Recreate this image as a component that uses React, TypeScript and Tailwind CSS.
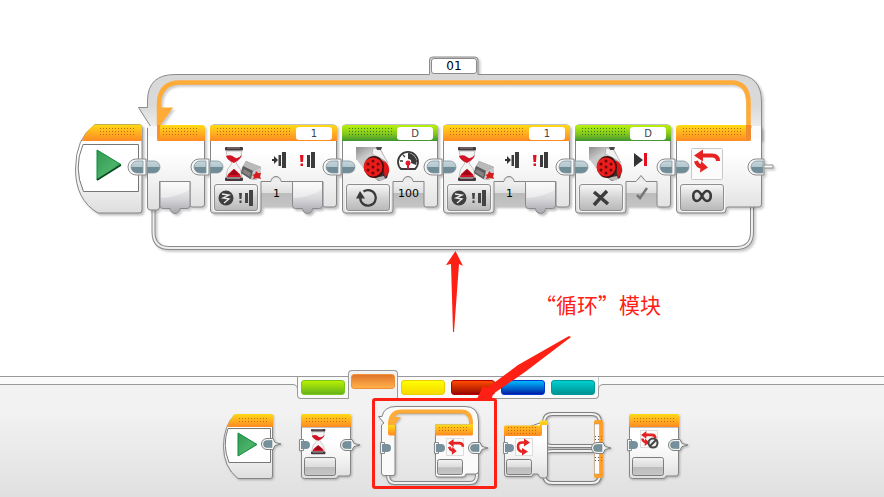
import React from 'react';

type Tone = 'orange' | 'green';

const SharedDefs = () => (
  <svg className="absolute h-0 w-0" aria-hidden="true">
    <defs>
      <linearGradient id="orange" x1="0" y1="0" x2="0" y2="1">
        <stop offset="0" stopColor="#ffdc14" />
        <stop offset="0.45" stopColor="#ffb41e" />
        <stop offset="1" stopColor="#ff8a24" />
      </linearGradient>
      <linearGradient id="green" x1="0" y1="0" x2="0" y2="1">
        <stop offset="0" stopColor="#baf20c" />
        <stop offset="0.6" stopColor="#7fc31e" />
        <stop offset="1" stopColor="#3f9433" />
      </linearGradient>
      <linearGradient id="body" x1="0" y1="0" x2="0" y2="1">
        <stop offset="0.3" stopColor="#ffffff" />
        <stop offset="0.7" stopColor="#efefef" />
        <stop offset="1" stopColor="#dedede" />
      </linearGradient>
      <linearGradient id="cell" x1="0" y1="0" x2="0" y2="1">
        <stop offset="0" stopColor="#f4f4f4" />
        <stop offset="0.5" stopColor="#dedede" />
        <stop offset="0.52" stopColor="#bcbcbc" />
        <stop offset="1" stopColor="#c4c4c4" />
      </linearGradient>
      <linearGradient id="output" x1="0" y1="0" x2="0" y2="1">
        <stop offset="0" stopColor="#fafafa" />
        <stop offset="0.55" stopColor="#d6d6da" />
        <stop offset="1" stopColor="#a6a6ab" />
      </linearGradient>
      <linearGradient id="port" x1="0" y1="0" x2="0" y2="1">
        <stop offset="0" stopColor="#c5d5db" />
        <stop offset="0.5" stopColor="#b4c7ce" />
        <stop offset="0.52" stopColor="#708d97" />
        <stop offset="1" stopColor="#708d97" />
      </linearGradient>
      <linearGradient id="key" x1="0" y1="0" x2="0" y2="1">
        <stop offset="0" stopColor="#f2f2f2" />
        <stop offset="0.5" stopColor="#dcdcdc" />
        <stop offset="0.55" stopColor="#bdbdbd" />
        <stop offset="1" stopColor="#c6c6c6" />
      </linearGradient>
      <linearGradient id="frame" x1="0" y1="0" x2="0" y2="1">
        <stop offset="0" stopColor="#d6d6d6" />
        <stop offset="0.6" stopColor="#dadada" />
        <stop offset="1" stopColor="#fafafa" />
      </linearGradient>
      <linearGradient id="play" x1="0" y1="0" x2="1" y2="1">
        <stop offset="0" stopColor="#2f9a4e" />
        <stop offset="0.6" stopColor="#4cb26a" />
        <stop offset="1" stopColor="#17803a" />
      </linearGradient>
      <linearGradient id="metal" x1="0" y1="0" x2="1" y2="1">
        <stop offset="0" stopColor="#8c8c8c" />
        <stop offset="1" stopColor="#f2f2f2" />
      </linearGradient>
      <pattern id="dotsOrange" width="3" height="3" patternUnits="userSpaceOnUse">
        <rect width="1" height="1" x="1" y="1" fill="#c06a00" />
      </pattern>
      <pattern id="dotsGreen" width="3" height="3" patternUnits="userSpaceOnUse">
        <rect width="1" height="1" x="1" y="1" fill="#2c7d1c" />
      </pattern>
      <pattern id="dotsDark" width="3" height="3" patternUnits="userSpaceOnUse">
        <rect width="1" height="1" x="1" y="1" fill="#555555" />
      </pattern>
    </defs>
  </svg>
);

const InPort = ({ x = 0, y = 43 }) => (
  <path d={`M${x} ${y - 6}h7a6 6 0 0 1 0 12h-7z`} fill="url(#port)" stroke="#84979e" strokeWidth="0.8" />
);

const OutPort = ({ x, y = 43, plug = false }: { x: number; y?: number; plug?: boolean }) => (
  <g>
    {plug && <path d={`M${x} ${y - 2}h11v3h-11z`} fill="#fff" stroke="#8b8b8b" />}
    <path
      d={`M${x + (plug ? 2 : 4)} ${y - 8}H${x - 6}a8 8 0 0 0 0 16H${x + (plug ? 2 : 4)}z`}
      fill="#f8f8f8"
      stroke="#8b8b8b"
    />
    <path d={`M${x + 1} ${y - 6}h-6a6 6 0 0 0 0 12h6z`} fill="url(#port)" stroke="#84979e" strokeWidth="0.8" />
  </g>
);

const OutputCell = ({ x }: { x: number }) => (
  <g>
    <path
      d={`M${x} 57.5h30v24q0 3-3 3h-7a5 5 0 0 1-10 0h-7q-3 0-3-3z`}
      fill="url(#output)"
      stroke="#8a8a8e"
    />
    <path d={`M${x + 1} 59h28v7q-12 7-28 8z`} fill="#fff" opacity="0.45" />
  </g>
);

const Hourglass = () => (
  <g>
    <path d="M1 4h16q0 7-6 12q6 6 6 14H1q0-8 6-14Q1 11 1 4z" fill="#f4f4f4" stroke="#b5b5b5" strokeWidth="0.8" />
    <path d="M1 9q5-2 8 1t8-2q-1 4-8 8Q2 13 1 9z" fill="#d31225" />
    <path d="M9 15v7q7 5 7 8H2q0-3 7-8z" fill="#d31225" />
    <path d="M4 28l5-6 5 6z" fill="#a00817" />
    <rect x="0" y="0" width="18" height="3.5" rx="1" fill="#45383c" />
    <rect x="0" y="30.5" width="18" height="3.5" rx="1" fill="#45383c" />
    <path d="M2 1h13M2 31.5h13" stroke="#a89ca0" strokeWidth="0.8" />
  </g>
);

const TouchSensor = () => (
  <g>
    <path d="M1 7L5 0l15 6v8l-5 5-6-1-9-6z" fill="#7d7d7d" />
    <path d="M5 0l15 6-8 4L2 5z" fill="#b9b9b9" />
    <path d="M2 5l10 5-2 8-10-6z" fill="#5c5c5c" />
    <path d="M3 8l7 4-1 4-8-5z" fill="#828282" />
    <path d="M12 10l8-4v8l-5 5-5-1z" fill="#c9c9c9" />
    <path d="M15 10l2 2h3l-1 3 1 3-4-1-4 1 1-3-2-1 3-1z" fill="#d81b1b" />
  </g>
);

const LoopArrows = () => (
  <g>
    <path d="M6 7.5h12q6 0 6 5.5" fill="none" stroke="#e62222" strokeWidth="4" />
    <path d="M0 7.5l9-6v12z" fill="#e62222" />
    <path d="M2 13q1 5 7 6" fill="none" stroke="#e62222" strokeWidth="4" />
    <path d="M7 13l7 6.5-8 5z" fill="#e62222" />
  </g>
);

interface ShellProps {
  width: number;
  tone: Tone;
  notch?: 'round' | 'peak';
  output?: boolean;
}

// Chrome of a standard block: coloured header, stepped body and the two ports
const BlockShell = ({ width: w, tone, notch = 'round', output = false }: ShellProps) => {
  const r = w - 14;
  return (
    <svg
      className="absolute inset-0 overflow-visible drop-shadow-[2px_2px_1px_rgba(0,0,0,0.25)]"
      width={w}
      height="90"
      viewBox={`0 0 ${w} 90`}
      aria-hidden="true"
    >
      <rect x="50" y="56" width="34" height="26" fill="url(#cell)" />
      <path
        d={`M.5 4Q.5 1 3.5 1H${w - 3.5}Q${w - 0.5} 1 ${w - 0.5} 4V80q0 3-3 3H${r + 2}q-2 0-2-2V57.5H${notch === 'round' ? '71a5 5 0 0 0-10 0' : '71l-5-6-5 6'}H51V86q0 3-3 3H3.5Q.5 89 .5 86z`}
        fill="url(#body)"
        stroke="#858585"
      />
      {notch === 'round' && <path d="M61.5 58a4.5 4.5 0 0 1 9 0z" fill="#ececec" />}
      {notch === 'peak' && <path d="M61.5 58l4.5-5.5 4.5 5.5z" fill="#ececec" />}
      {output && <OutputCell x={82.5} />}
      <path d={`M0 17V4Q0 1 3 1H${w - 3}Q${w} 1 ${w} 4V17z`} fill={tone === 'orange' ? 'url(#orange)' : 'url(#green)'} />
      <rect x="5" y="3" width={w - 50} height="9" fill={tone === 'orange' ? 'url(#dotsOrange)' : 'url(#dotsGreen)'} />
      <InPort />
      <OutPort x={w} />
    </svg>
  );
};

const paramButton =
  'flex h-[27px] w-[44px] items-center justify-center rounded-[3px] border border-[#8f8f8f] bg-linear-to-b from-[#f4f4f4] from-5% via-[#d4d4d4] to-[#b9b9b9] shadow-[0_0_0_1px_#f5f5f5]';
const portInput =
  'h-[13px] w-[36px] rounded-[3px] bg-white text-center font-["DejaVu_Sans",sans-serif] text-[10px] leading-[13px] text-[#444] outline-none';
const valueInput =
  'ml-[3px] h-[20px] w-[31px] bg-transparent text-center font-["DejaVu_Sans",sans-serif] text-[11px] leading-[20px] text-black outline-none';

const StartBlock = () => (
  <div className="relative h-[90px] w-[67px]">
    <svg
      className="overflow-visible drop-shadow-[2px_2px_1px_rgba(0,0,0,0.25)]"
      width="67"
      height="90"
      viewBox="0 0 67 90"
      role="img"
      aria-label="Start"
    >
      <path d="M20 .5H64q3 0 3 3V86q0 3-3 3H23Q.5 76 .5 45Q.5 14 20 .5z" fill="url(#body)" stroke="#858585" />
      <path d="M7 17Q11 6 20 .5H64q3 0 3 3V17z" fill="url(#orange)" />
      <rect x="23" y="3" width="36" height="9" fill="url(#dotsOrange)" />
      <path d="M8 20.5H63.5V67.5H8.5Q-2 44 8 20.5z" fill="#fff" stroke="#777" />
      <path d="M22 26L46 40.5 22 56z" fill="url(#play)" stroke="#0f8a3c" />
      <path d="M22 56L46 41" stroke="#0b4a20" strokeWidth="1.5" />
      <OutPort x={67} />
    </svg>
  </div>
);

const LoopStart = () => (
  <div className="relative h-[90px] w-[58px]">
    <svg
      className="overflow-visible drop-shadow-[2px_2px_1px_rgba(0,0,0,0.2)]"
      width="58"
      height="90"
      viewBox="0 0 58 90"
      aria-hidden="true"
    >
      <path d="M.5 4H57.5V80q0 3-3 3H45q-2 0-2-2V57.5H12.5V83q0 3-3 3h-6q-3 0-3-3z" fill="url(#body)" stroke="#858585" />
      <path d="M1 2h10v10H1z" fill="#f8f8f8" />
      <OutputCell x={13} />
      <path d="M10 1H55q3 0 3 3V17H12q-2 0-2-2z" fill="url(#orange)" />
      <path d="M10 1h3v16h-1q-2 0-2-2z" fill="#fb9226" />
      <rect x="14" y="3" width="36" height="9" fill="url(#dotsOrange)" />
      <InPort />
      <OutPort x={58} />
    </svg>
  </div>
);

const WaitBlock = () => (
  <div className="relative h-[90px] w-[127px]">
    <BlockShell width={127} tone="orange" output />
    <div className="relative flex justify-end pt-[3px] pr-[5px]">
      <input className={portInput} defaultValue="1" aria-label="Sensor port" />
    </div>
    <svg className="relative block" width="127" height="44" viewBox="0 16 127 44" aria-hidden="true">
      <g transform="translate(15 23)">
        <Hourglass />
      </g>
      <g transform="translate(31 37)">
        <TouchSensor />
      </g>
      <path d="M62 35h2v-3l4 4-4 4v-3h-2z" fill="#333" />
      <path d="M68.5 31h2.5v11h-2.5zM72 28h4v16h-4z" fill="#3c3c3c" />
      <path d="M90 31h3.5l-.5 7h-2.500zM90.5 39.5h2.500v2.500h-2.500z" fill="#e30f1c" />
      <path d="M97 31h3v12h-3zM101 28h4v16h-4z" fill="#3c3c3c" />
    </svg>
    <div className="relative flex pl-1">
      <button className={paramButton} aria-label="Compare touch sensor state">
        <svg width="36" height="18" viewBox="0 0 36 18">
          <circle cx="8" cy="9" r="7.5" fill="#3f3f3f" />
          <path d="M4 5l7 1-6 3 6 1-5 4" fill="none" stroke="#eee" strokeWidth="1.3" />
          <path d="M21 4h3l-.5 6h-2zM21.5 11.5h2V14h-2z" fill="#444" />
          <path d="M27 4h3v10h-3zM31 1h4v16h-4z" fill="#444" />
        </svg>
      </button>
      <input className={valueInput} defaultValue="1" aria-label="State" />
    </div>
  </div>
);

const MotorIcon = () => (
  <g transform="translate(14 23)">
    <path d="M0 0h20l6 4 8 19-3 8-9 3L8 22 0 12z" fill="#c8c8c8" />
    <path d="M0 0h20l-6 9-14 4z" fill="url(#metal)" />
    <path d="M17 1l7 1 8 14-6-4-10-5z" fill="#f1f1f1" stroke="#999" strokeWidth="0.6" />
    <path d="M20 0h6l-1 3h-4z" fill="#4a4a4a" />
    <path d="M14 27l14-10 5 6-2 8-8 3z" fill="#3b3030" />
    <path d="M26 13q8 3 7 12l-4 6z" fill="#dc1717" />
    <path d="M18 31l10-2 1 3-5 2z" fill="#b9b9b9" />
    <ellipse cx="18" cy="20" rx="10" ry="11" fill="#3d1010" />
    <circle cx="17" cy="20" r="9.5" fill="#ea1c1c" />
    <g fill="#6d0909">
      <circle cx="17" cy="20" r="1.5" />
      <circle cx="17" cy="14" r="1.5" />
      <circle cx="22" cy="17" r="1.5" />
      <circle cx="22" cy="23" r="1.5" />
      <circle cx="17" cy="26" r="1.5" />
      <circle cx="12" cy="23" r="1.5" />
      <circle cx="12" cy="17" r="1.5" />
    </g>
  </g>
);

const MotorOnBlock = () => (
  <div className="relative h-[90px] w-[96px]">
    <BlockShell width={96} tone="green" />
    <div className="relative flex justify-end pt-[3px] pr-[5px]">
      <input className={portInput} defaultValue="D" aria-label="Motor port" />
    </div>
    <svg className="relative block" width="96" height="44" viewBox="0 16 96 44" aria-hidden="true">
      <MotorIcon />
      <path d="M59 45a10 10 0 1 1 14 0z" fill="#fff" stroke="#3a3a3a" strokeWidth="1.8" />
      <path d="M66 29a9 9 0 0 1 8 12l-5-2q1-4-3-4z" fill="#3a3a3a" />
      <path d="M58 37h3M61 31l2 2M71 37h4" stroke="#3a3a3a" strokeWidth="1.3" />
      <path d="M66 39v6" stroke="#e11a35" strokeWidth="2" />
      <circle cx="66" cy="39" r="2.5" fill="#e11a35" />
    </svg>
    <div className="relative flex pl-1">
      <button className={paramButton} aria-label="On">
        <svg width="24" height="20" viewBox="0 0 24 20">
          <path d="M7.500 3.500A7.800 7.800 0 1 1 4.200 10" fill="none" stroke="#3a3a3a" strokeWidth="2.3" />
          <path d="M0 10.500L4 3l5 7.500z" fill="#3a3a3a" />
        </svg>
      </button>
      <input className={valueInput} defaultValue="100" aria-label="Power" />
    </div>
  </div>
);

const MotorOffBlock = () => (
  <div className="relative h-[90px] w-[96px]">
    <BlockShell width={96} tone="green" notch="peak" />
    <div className="relative flex justify-end pt-[3px] pr-[5px]">
      <input className={portInput} defaultValue="D" aria-label="Motor port" />
    </div>
    <svg className="relative block" width="96" height="44" viewBox="0 16 96 44" aria-hidden="true">
      <MotorIcon />
      <path d="M59 29v14l9-7z" fill="#333" />
      <path d="M69 29h3v13h-3z" fill="#e30f1c" />
    </svg>
    <div className="relative flex pl-1">
      <button className={paramButton} aria-label="Off">
        <svg width="18" height="18" viewBox="0 0 18 18">
          <path d="M2 3Q8 8 16 15M15 2Q9 8 2 16" fill="none" stroke="#3c3c3c" strokeWidth="3.5" />
        </svg>
      </button>
      <button className="ml-[3px] flex h-[20px] w-[31px] items-center justify-center" aria-label="Brake at end">
        <svg width="14" height="14" viewBox="0 0 14 14">
          <path d="M2 8l3 3 7-10" fill="none" stroke="#777" strokeWidth="2.5" />
        </svg>
      </button>
    </div>
  </div>
);

const LoopEnd = () => (
  <div className="relative h-[90px] w-[86px]">
    <svg
      className="absolute inset-0 overflow-visible drop-shadow-[2px_2px_1px_rgba(0,0,0,0.2)]"
      width="86"
      height="90"
      viewBox="0 0 86 90"
      aria-hidden="true"
    >
      <path d="M.5 4V86q0 3 3 3H47q3 0 3-3v-1q0-2 2-2H83q2.500 0 2.500-3V4z" fill="url(#body)" />
      <path d="M.5 4V86q0 3 3 3H47q3 0 3-3v-1q0-2 2-2H83q2.500 0 2.500-3V4" fill="none" stroke="#858585" />
      <path d="M76 2h9v12h-9z" fill="#fcfcfc" />
      <path d="M0 17V4q0-3 3-3H75V15q0 2-2 2z" fill="url(#orange)" />
      <path d="M70 1h5v14q0 2-2 2h-3z" fill="#f28a30" />
      <rect x="5" y="3" width="60" height="9" fill="url(#dotsOrange)" />
      <rect x="15.5" y="24.5" width="31" height="31" rx="1" fill="#fbfbfb" stroke="#c8c8c8" />
      <g transform="translate(18 24)">
        <LoopArrows />
      </g>
      <InPort />
      <OutPort x={86} plug />
    </svg>
    <div className="relative pt-[60px] pl-1">
      <button className={paramButton} aria-label="Unlimited">
        <svg className="-mt-[3px]" width="20" height="14" viewBox="0 0 20 14">
          <path
            d="M10 7Q7.500 2 5 2C0 2 0 12 5 12Q7.500 12 10 7T15 2C20 2 20 12 15 12Q12.500 12 10 7z"
            fill="none"
            stroke="#3a3a3a"
            strokeWidth="2.6"
          />
        </svg>
      </button>
    </div>
  </div>
);

// Frame that wraps all blocks between the loop start and the loop end
const LoopFrame = () => (
  <svg
    className="absolute top-0 left-0 overflow-visible drop-shadow-[2px_2px_1px_rgba(0,0,0,0.2)]"
    width="640"
    height="200"
    viewBox="137 54 640 200"
    aria-hidden="true"
  >
    <path d="M153.5 208v24q0 16 16 16H736q16 0 16-16V204" fill="none" stroke="#8b8b8b" strokeWidth="4" />
    <path d="M153.5 208v24q0 16 16 16H736q16 0 16-16V204" fill="none" stroke="#eeeeee" strokeWidth="2" />
    <path
      d="M151 127L138.5 107.5H147.5V100Q148 74.5 175 74.5H429.5V60q0-3 3-3H475q3 0 3 3V74.5H736Q762 75 762 102V140H746V104Q746 84 730 84H182Q160 84 160 106V140H151z"
      fill="url(#frame)"
    />
    <path
      d="M147.5 130L151 127 138.5 107.5H147.5V100Q148 74.5 175 74.5H429.5V60q0-3 3-3H475q3 0 3 3V74.5H736Q761.5 75 761.5 102V140"
      fill="none"
      stroke="#8b8b8b"
    />
    <path d="M159 140V103Q160 82.5 180 82.5H731Q748.5 82.5 748.5 103V140" fill="none" stroke="#ffab38" strokeWidth="4.5" />
    <path d="M158 107.5H173L160 126z" fill="#ffab38" />
  </svg>
);

const MiniKey = ({ x, y, w = 26, h = 16 }: { x: number; y: number; w?: number; h?: number }) => (
  <rect x={x + 0.5} y={y + 0.5} width={w} height={h} rx="2" fill="url(#key)" stroke="#7d7d7d" />
);

const MiniIn = ({ x, y }: { x: number; y: number }) => (
  <g>
    <path d={`M${x - 1.5} ${y - 5.5}h4v11h-4z`} fill="#f4f4f4" stroke="#8b8b8b" />
    <path d={`M${x} ${y - 4}h5a4 4 0 0 1 0 8h-5z`} fill="#76919b" />
  </g>
);

const MiniOut = ({ x, y }: { x: number; y: number }) => (
  <g>
    <path d={`M${x + 1} ${y - 5.5}h-6a5.500 5.500 0 0 0 0 11h6l2-4 6-1.500-6-1.500z`} fill="#f4f4f4" stroke="#808080" />
    <path d={`M${x} ${y - 3.5}h-5a3.5 3.5 0 0 0 0 7h5z`} fill="#76919b" stroke="#5f7a84" strokeWidth="0.5" />
  </g>
);

const MiniBody = () => (
  <g>
    <path d="M2.5 28V77q0 2.5 3 2.5H36q3 0 3-2.5H49q2.500 0 2.500-3V28z" fill="url(#body)" stroke="#858585" />
    <path d="M2 28V17q0-2 2-2H50q2 0 2 2V28z" fill="url(#orange)" />
    <rect x="6" y="18" width="42" height="6" fill="url(#dotsOrange)" />
    <MiniIn x={2} y={46} />
    <MiniOut x={52} y={46} />
    <MiniKey x={5} y={58} w={31} h={18} />
  </g>
);

const miniSvg = 'block overflow-visible drop-shadow-[1px_1px_1px_rgba(0,0,0,0.25)]';

const MiniStart = () => (
  <svg className={miniSvg} width="62" height="88" viewBox="0 0 62 88">
    <path d="M12 15.5H47q2.500 0 2.500 2V77q0 2.5-2 2.5H15Q.5 68 .5 47.5T12 15.5z" fill="url(#body)" stroke="#858585" />
    <path d="M4 28Q7 20 12 15H48q2 0 2 2V28z" fill="url(#orange)" />
    <rect x="14" y="18" width="31" height="6" fill="url(#dotsOrange)" />
    <path d="M5 29.5H47.5V63.5H6Q-1 46 5 29.5z" fill="#fff" stroke="#777" />
    <path d="M15 34L34 45.5 15 57z" fill="url(#play)" stroke="#0f8a3c" />
    <MiniOut x={49} y={45} />
  </svg>
);

const MiniWait = () => (
  <svg className={miniSvg} width="62" height="88" viewBox="0 0 62 88">
    <MiniBody />
    <g transform="translate(12 30) scale(0.8 0.74)">
      <Hourglass />
    </g>
  </svg>
);

const MiniLoop = () => (
  <svg className={miniSvg} width="112" height="88" viewBox="0 0 112 88">
    <path d="M13 76q0 8 7 8H95q7 0 7-8V72" fill="none" stroke="#858585" strokeWidth="4" />
    <path d="M13 76q0 8 7 8H95q7 0 7-8V72" fill="none" stroke="#f1f1f1" strokeWidth="2" />
    <path
      d="M6.5 74V26L9 24 3.5 17.5H7Q9 7.5 21 7.5H90Q103.5 7.5 103.5 22V72q0 3-3 3H91q-1 3-3 3H63q-2.5 0-2.5-2.5V26H96V22q0-8-8-8H24q-8 0-8 12H20V74q0 2.5-2 2.5H9q-2.5 0-2.5-2.5z"
      fill="#fafafa"
      stroke="#858585"
    />
    <path d="M15 30V24Q16 12.500 27 12.500H86Q96 12.500 96 24V30" fill="none" stroke="#ffab38" strokeWidth="4" />
    <path d="M14 18h12l-6 7-6 5z" fill="#ffab38" />
    <path d="M13 26h7V36.5H15q-2 0-2-2z" fill="url(#orange)" />
    <path d="M60 36V27q0-1.500 2-1.500H98V35q0 1.500-2 1.500H60z" fill="url(#orange)" />
    <rect x="63" y="27" width="31" height="6" fill="url(#dotsOrange)" />
    <rect x="71.5" y="39.5" width="17" height="17" fill="#fbfbfb" stroke="#dddddd" />
    <g transform="translate(73 39) scale(0.62 0.68)">
      <LoopArrows />
    </g>
    <MiniKey x={62} y={60} w={25} h={15} />
    <MiniIn x={7} y={49} />
    <MiniIn x={61} y={49} />
    <MiniOut x={104} y={49} />
  </svg>
);

const MiniSwitch = () => (
  <svg className={miniSvg} width="112" height="88" viewBox="0 0 112 88">
    {['M43 24q0-9 8-9H91q8 0 8 9v17q0 6-8 6H51q-8 0-8-6z', 'M43 58q0-6 8-6H91q8 0 8 6v17q0 9-8 9H51q-8 0-8-9z'].map((d) => (
      <g key={d} fill="none">
        <path d={d} stroke="#808080" strokeWidth="4" />
        <path d={d} stroke="#f1f1f1" strokeWidth="2" />
      </g>
    ))}
    <path d="M3.5 36V75q0 2.5 2.5 2.5H30q2 0 2-2.5h5q1 4 4 4h3q2.5 0 2.5-3V24H39z" fill="url(#body)" stroke="#858585" />
    <path d="M3 37V28q0-1.5 2-1.5H39V23q0-1.5 1.5-1.5H45q2 0 2 2V26H41V35q0 2-2 2z" fill="url(#orange)" />
    <rect x="6" y="27" width="30" height="9" fill="url(#dotsOrange)" />
    <rect x="14.5" y="39.5" width="17" height="17" fill="#fbfbfb" stroke="#dddddd" />
    <path d="M24 43.5h-3q-4 0-4 4t3 5h3" fill="none" stroke="#e62222" strokeWidth="2.5" />
    <path d="M23 39.5l6 4-6 4zM21 49l6 3.500-6 4z" fill="#e62222" />
    <MiniKey x={5} y={60} w={25} h={15} />
    <MiniIn x={4} y={49} />
    <rect x="93" y="21" width="9" height="58" rx="2" fill="#ff9f27" />
    <rect x="93.5" y="25" width="5" height="50" fill="#fbfbfb" stroke="#999" strokeWidth="0.5" />
    <rect x="93" y="36" width="6" height="7" fill="url(#dotsDark)" />
    <rect x="93" y="57" width="6" height="7" fill="url(#dotsDark)" />
    <rect x="99" y="36" width="3" height="7" fill="url(#dotsOrange)" />
    <rect x="99" y="57" width="3" height="7" fill="url(#dotsOrange)" />
    <MiniOut x={101} y={49} />
  </svg>
);

const MiniInterrupt = () => (
  <svg className={miniSvg} width="62" height="88" viewBox="0 0 62 88">
    <MiniBody />
    <rect x="13.5" y="31.5" width="17" height="17" fill="#fbfbfb" stroke="#dddddd" />
    <g transform="translate(14 31) scale(0.6 0.65)">
      <LoopArrows />
    </g>
    <circle cx="26" cy="44" r="4.5" fill="#eeeeee" stroke="#444" strokeWidth="2" />
    <path d="M29 41l-6 6" stroke="#444" strokeWidth="2" />
  </svg>
);

const tabs = [
  { name: 'Action', color: 'from-[#b9f000] to-[#66b417] border-[#7cc51b]' },
  { name: 'Flow', color: 'from-[#e0762c] to-[#ffb14a] border-[#f0913a]' },
  { name: 'Sensor', color: 'from-[#ffff00] to-[#f5d800] border-[#e8cf00]' },
  { name: 'Data', color: 'from-[#ff4b00] to-[#990000] border-[#b80000]' },
  { name: 'Advanced', color: 'from-[#00b8ff] to-[#0015a5] border-[#0038d0]' },
  { name: 'My Blocks', color: 'from-[#00d0d0] to-[#009494] border-[#009a9a]' },
];

const paletteBlocks = [
  { name: 'Start', Icon: MiniStart },
  { name: 'Wait', Icon: MiniWait },
  { name: 'Loop', Icon: MiniLoop },
  { name: 'Switch', Icon: MiniSwitch },
  { name: 'Loop Interrupt', Icon: MiniInterrupt },
];

// Concave corner that joins the tab strip to the line beside it
const Flare = ({ flip = false }: { flip?: boolean }) => (
  <svg className={flip ? '-ml-px -scale-x-100' : '-mr-px'} width="5" height="22" viewBox="0 0 5 22" aria-hidden="true">
    <path d="M0 7.5Q4.5 8 4.5 12V0H0z" fill="#fafafa" />
    <path d="M0 7.5Q4.5 8 4.5 12" fill="none" stroke="#999" />
  </svg>
);

const App = () => {
  const activeTab = 'Flow';

  return (
    <div className="relative flex min-h-screen flex-col bg-white">
      <SharedDefs />

      {/* Program canvas */}
      <main className="relative flex-1">
        <div className="absolute top-[54px] left-[137px]">
          <LoopFrame />
        </div>
        <input
          className="absolute top-[58px] left-[431px] h-[16px] w-[46px] rounded-[3px] border border-[#8b8b8b] bg-white text-center font-['DejaVu_Sans',sans-serif] text-[12px] leading-[14px] text-black outline-none"
          defaultValue="01"
          aria-label="Loop name"
        />
        <div className="flex gap-[5px] pt-[124px] pl-[75px]">
          <StartBlock />
          <LoopStart />
          <WaitBlock />
          <MotorOnBlock />
          <WaitBlock />
          <MotorOffBlock />
          <LoopEnd />
        </div>
      </main>

      {/* Block palette */}
      <footer className="bg-linear-to-b from-[#f2f2f2] from-30% to-[#e0e0e0]">
        <div className="h-[9px] border-y border-[#999] bg-[#fafafa]" />
        <div className="-mt-[8px] flex justify-center pl-3">
          <Flare />
          <div role="tablist" className="flex h-[22px] rounded-b-[4px] border-x border-b border-[#999] bg-[#fafafa]">
            {tabs.map((tab) => (
              <div
                key={tab.name}
                className={
                  tab.name === activeTab
                    ? '-mt-[7px] h-[29px] w-[50px] rounded-t-[4px] border-x border-t border-[#999] bg-[#f2f2f2] px-[2px] pt-[3px]'
                    : 'w-[50px] px-[3px] pt-[3px]'
                }
              >
                <button
                  role="tab"
                  aria-selected={tab.name === activeTab}
                  aria-label={tab.name}
                  className={`block h-[15px] w-full rounded-[3px] border bg-linear-to-b ${tab.color}`}
                />
              </div>
            ))}
          </div>
          <Flare flip />
        </div>
        <div className="flex justify-center gap-[14px] pb-[10px] pl-[28px]">
          {paletteBlocks.map(({ name, Icon }) => (
            <button key={name} aria-label={name} className="relative">
              <Icon />
              {name === 'Loop' && (
                <span className="absolute -top-px -right-[10px] -bottom-[2px] -left-[3px] rounded-[3px] border-3 border-[#ff2015]" />
              )}
            </button>
          ))}
        </div>
      </footer>

      {/* Annotations */}
      <p
        lang="zh-CN"
        className="absolute top-[289px] left-[535px] font-['Noto_Sans_CJK_SC',sans-serif] text-[21px] leading-[30px] whitespace-nowrap text-[#ff2015]"
      >
        “循环”模块
      </p>
      <svg
        className="pointer-events-none absolute top-[250px] left-[440px]"
        width="140"
        height="160"
        viewBox="440 250 140 160"
        aria-hidden="true"
      >
        <path d="M455.5 251L463 266 459 264 454 332H453L451 264 446 265z" fill="#ff2015" />
        <path d="M571 337L525 372 493 394 492 398 476 401 483 386 487 388 518 365 569 336z" fill="#ff2015" />
      </svg>
    </div>
  );
};

export default App;
